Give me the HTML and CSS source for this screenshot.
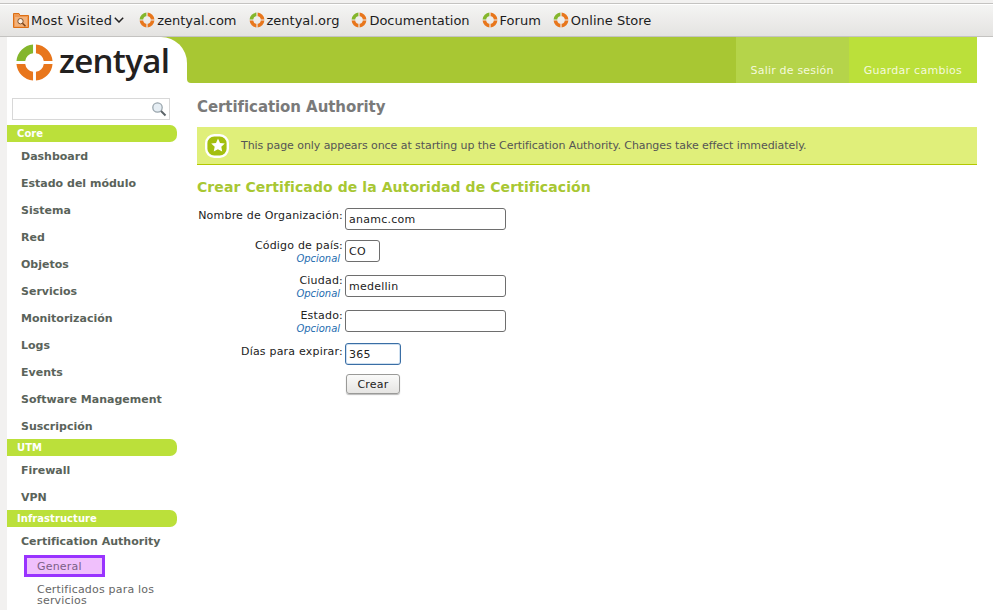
FILE: index.html
```html
<!DOCTYPE html>
<html lang="es">
<head>
<meta charset="utf-8">
<title>Zentyal</title>
<link rel="stylesheet" href="styles.css">
</head>
<body>
<svg class="defs" width="0" height="0" aria-hidden="true">
  <defs>
    <symbol id="ring" viewBox="0 0 40 40">
      <path d="M18.5 1.5A18.5 18.5 0 0 0 1.5 18.5H10.5A9 9 0 0 1 18.5 10.5Z" fill="#84b62c"/>
      <path d="M21.5 1.5A18.5 18.5 0 0 1 38.5 18.5H29.5A9 9 0 0 0 21.5 10.5Z" fill="#e8761c"/>
      <path d="M1.5 21.5A18.5 18.5 0 0 0 18.5 38.5V29.5A9 9 0 0 1 10.5 21.5Z" fill="#e8761c"/>
      <path d="M38.5 21.5A18.5 18.5 0 0 1 21.5 38.5V29.5A9 9 0 0 0 29.5 21.5Z" fill="#e8761c"/>
    </symbol>
  </defs>
</svg>
<header class="toolbar">
  <div class="bookmark first">
    <svg class="folder" viewBox="0 0 16 16" width="16" height="16" aria-hidden="true">
      <path d="M.5 15.5V1.5H6L7 3.5H15.5V15.5Z" fill="#ee9a55" stroke="#dd6f14"/>
      <rect x="2" y="5" width="12" height="9.5" fill="#f4b27a"/>
      <circle cx="7.5" cy="9.2" r="2.7" fill="#fdf0e2" stroke="#7c5230"/>
      <path d="M9.5 11.2l3 3" stroke="#7c4418" stroke-width="1.5"/>
    </svg>
    <span>Most Visited</span>
    <svg class="chev" viewBox="0 0 10 6" width="10" height="6" aria-hidden="true"><path d="M.8.8L5 5 9.2.8" fill="none" stroke="#222" stroke-width="1.5"/></svg>
  </div>
  <div class="bookmark"><svg class="fav" aria-hidden="true"><use href="#ring"/></svg><span>zentyal.com</span></div>
  <div class="bookmark"><svg class="fav" aria-hidden="true"><use href="#ring"/></svg><span>zentyal.org</span></div>
  <div class="bookmark"><svg class="fav" aria-hidden="true"><use href="#ring"/></svg><span>Documentation</span></div>
  <div class="bookmark"><svg class="fav" aria-hidden="true"><use href="#ring"/></svg><span>Forum</span></div>
  <div class="bookmark"><svg class="fav" aria-hidden="true"><use href="#ring"/></svg><span>Online Store</span></div>
</header>
<div class="page">
  <div class="topbar">
    <div class="brand">
      <svg class="logo-ring" aria-hidden="true"><use href="#ring"/></svg>
      <span class="logo-text">zentyal</span>
    </div>
    <div class="bar">
      <a class="action logout">Salir de sesión</a>
      <a class="action save">Guardar cambios</a>
    </div>
  </div>
  <div class="columns">
    <aside class="sidebar">
      <div class="search">
        <svg class="search-icon" viewBox="0 0 16 16" width="16" height="16" aria-hidden="true">
          <circle cx="6.5" cy="6.5" r="4.7" fill="#e6eef4" stroke="#9aa6ad" stroke-width="1.3"/>
          <path d="M10 10l4.5 4.5" stroke="#5c6468" stroke-width="2"/>
        </svg>
      </div>
      <div class="group">Core</div>
      <a class="item">Dashboard</a>
      <a class="item">Estado del módulo</a>
      <a class="item">Sistema</a>
      <a class="item">Red</a>
      <a class="item">Objetos</a>
      <a class="item">Servicios</a>
      <a class="item">Monitorización</a>
      <a class="item">Logs</a>
      <a class="item">Events</a>
      <a class="item">Software Management</a>
      <a class="item">Suscripción</a>
      <div class="group">UTM</div>
      <a class="item">Firewall</a>
      <a class="item">VPN</a>
      <div class="group">Infrastructure</div>
      <a class="item">Certification Authority</a>
      <a class="sub current">General</a>
      <a class="sub">Certificados para los servicios</a>
    </aside>
    <main class="content">
      <h1 class="title">Certification Authority</h1>
      <div class="notice">
        <svg class="notice-icon" viewBox="0 0 24 24" width="24" height="24" aria-hidden="true">
          <rect x="1.2" y="1.2" width="21.6" height="21.6" rx="8" fill="#a3bf0e" stroke="#fff" stroke-width="2.4"/>
          <path d="M13 4.6l2 4.4 4.8.6-3.5 3.2.9 4.8-4.3-2.4-4.2 2.3 1-4.7-3.5-3.3 4.8-.5Z" fill="#fff"/>
        </svg>
        <span>This page only appears once at starting up the Certification Authority. Changes take effect immediately.</span>
      </div>
      <h2 class="subtitle">Crear Certificado de la Autoridad de Certificación</h2>
      <form class="form">
        <div class="row first-row">
          <div class="label plain">Nombre de Organización:</div>
          <input class="field wide" type="text" value="anamc.com">
        </div>
        <div class="row opt">
          <div class="label"><span>Código de país:</span><em>Opcional</em></div>
          <input class="field tiny" type="text" value="CO">
        </div>
        <div class="row opt">
          <div class="label"><span>Ciudad:</span><em>Opcional</em></div>
          <input class="field wide" type="text" value="medellin">
        </div>
        <div class="row opt short">
          <div class="label"><span>Estado:</span><em>Opcional</em></div>
          <input class="field wide" type="text" value="">
        </div>
        <div class="row days">
          <div class="label plain">Días para expirar:</div>
          <input class="field mid focus" type="text" value="365">
        </div>
        <div class="row">
          <div class="label"></div>
          <button class="btn" type="button">Crear</button>
        </div>
      </form>
    </main>
  </div>
</div>
</body>
</html>
```

FILE: styles.css
```css
* { box-sizing: border-box; }
html, body { margin: 0; padding: 0; height: 100%; overflow: hidden; }
body {
  background: #f2f1f0;
  font-family: "DejaVu Sans", sans-serif;
  font-size: 11px;
  color: #222;
}
.defs { position: absolute; }
.toolbar {
  height: 34px;
  margin-top: 3px;
  padding: 0 0 0 13px;
  display: flex;
  align-items: center;
  border-top: 1px solid #c4c3c1;
  border-bottom: 1px solid #c4c3c1;
  background: linear-gradient(#f5f5f4, #e4e3e1);
  font-size: 13px;
  color: #1c1c1c;
  box-shadow: inset 0 1px 0 #fff;
}
.bookmark { display: flex; align-items: center; gap: 2px; margin-left: 12px; white-space: nowrap; }
.bookmark.first { margin-left: 0; margin-right: 15px; letter-spacing: .17px; }
.bookmark.first + .bookmark { margin-left: 0; }
.fav { width: 16px; height: 16px; }
.page {
  margin-left: 7px;
  height: 573px;
  background: #fff;
  overflow: hidden;
}
.topbar {
  display: flex;
  height: 46px;
  margin-right: 16px;
  background: linear-gradient(#a8c733 0 30px, transparent 30px);
}
.brand {
  width: 180px;
  background: #fff;
  border-top-right-radius: 26px;
  display: flex;
  align-items: flex-start;
  padding: 6px 0 0 9px;
  gap: 5px;
}
.logo-ring { width: 39px; height: 39px; flex: none; margin-left: -1px; }
.logo-text {
  font-family: "Open Sans", sans-serif;
  font-weight: 600;
  font-size: 33px;
  line-height: 36px;
  letter-spacing: -.65px;
  color: #23211f;
}
.bar {
  flex: 1;
  display: flex;
  justify-content: flex-end;
  background: #a8c733;
  border-bottom-left-radius: 4px;
}
.action {
  display: flex;
  align-items: flex-end;
  padding: 0 15px 6px;
  color: #f4f9dc;
  font-size: 11px;
  line-height: 13px;
  letter-spacing: .2px;
  white-space: nowrap;
}
.logout { background: #b5d44a; }
.save { background: #bbe03a; letter-spacing: .27px; }
.columns { display: flex; }
.sidebar { width: 170px; flex: none; padding-top: 15px; }
.search {
  height: 22px;
  margin: 0 7px 5px 5px;
  border: 1px solid #d8d8d8;
  background: #fff;
  display: flex;
  justify-content: flex-end;
  align-items: center;
  padding-right: 2px;
}
.group {
  height: 17px;
  line-height: 18px;
  padding-left: 10px;
  background: #bbe03a;
  border-radius: 0 7px 7px 0;
  color: #fff;
  font-weight: bold;
  font-size: 10px;
  letter-spacing: .05px;
}
.item {
  display: block;
  height: 27px;
  line-height: 29px;
  padding-left: 14px;
  color: #5a635a;
  font-weight: bold;
  font-size: 11px;
  white-space: nowrap;
}
.sub {
  display: block;
  margin-left: 30px;
  color: #666;
  font-size: 11px;
  line-height: 11px;
  letter-spacing: .2px;
}
.sub.current {
  margin: 1px 72px 7px 17px;
  height: 22px;
  line-height: 18px;
  padding-left: 10px;
  border: 3px solid #9933ff;
  background: #f0c0fc;
  color: #7a5f86;
}
.content { flex: 1; padding: 0 16px 0 20px; }
.title {
  margin: 15px 0 0;
  font-size: 15px;
  line-height: 19px;
  color: #7a7a7a;
  font-weight: bold;
  letter-spacing: -.07px;
}
.notice {
  margin-top: 10px;
  height: 38px;
  padding-left: 8px;
  display: flex;
  align-items: center;
  gap: 12px;
  background: #e0ef7a;
  border-bottom: 1px solid #b3c800;
  color: #555;
  font-size: 11px;
  letter-spacing: -.07px;
  white-space: nowrap;
}
.notice-icon { flex: none; }
.subtitle {
  margin: 14px 0 0;
  font-size: 14px;
  line-height: 16px;
  color: #a8c733;
  font-weight: bold;
  letter-spacing: .08px;
}
.form { margin-top: 13px; }
.row { display: flex; gap: 2px; align-items: flex-start; margin-bottom: 10px; }
.row.opt { margin-bottom: 10px; }
.row.short { margin-bottom: 8px; }
.row.days { margin-bottom: 9px; }
.label {
  width: 146px;
  flex: none;
  text-align: right;
  font-size: 11px;
  line-height: 13px;
  letter-spacing: .2px;
  color: #222;
  margin-top: -1px;
  white-space: nowrap;
}
.label.plain { padding-top: 2px; margin-top: 0; }
.first-row .label.plain { padding-top: 1px; }
.label span, .label em { display: block; }
.label em { color: #1f6db0; font-size: 10px; padding-right: 3px; letter-spacing: -.03px; }
.field {
  height: 22px;
  border: 1px solid #6e6e6e;
  border-radius: 3px;
  padding: 0 3px;
  background: #fff;
  font-family: "DejaVu Sans", sans-serif;
  font-size: 11px;
  letter-spacing: .25px;
  color: #222;
  outline: none;
}
.wide { width: 161px; }
.tiny { width: 35px; }
.mid { width: 56px; }
.focus { border-color: #3a6ea5; box-shadow: 0 0 0 1px #cfe0f0 inset; }
.btn {
  width: 54px;
  height: 20px;
  margin-left: 1px;
  padding: 0;
  border: 1px solid #9a9a98;
  border-radius: 3px;
  background: linear-gradient(#fafaf9, #e6e5e3);
  box-shadow: 0 1px 1px #bbb;
  font-family: "DejaVu Sans", sans-serif;
  font-size: 11px;
  letter-spacing: .25px;
  color: #222;
}
```
